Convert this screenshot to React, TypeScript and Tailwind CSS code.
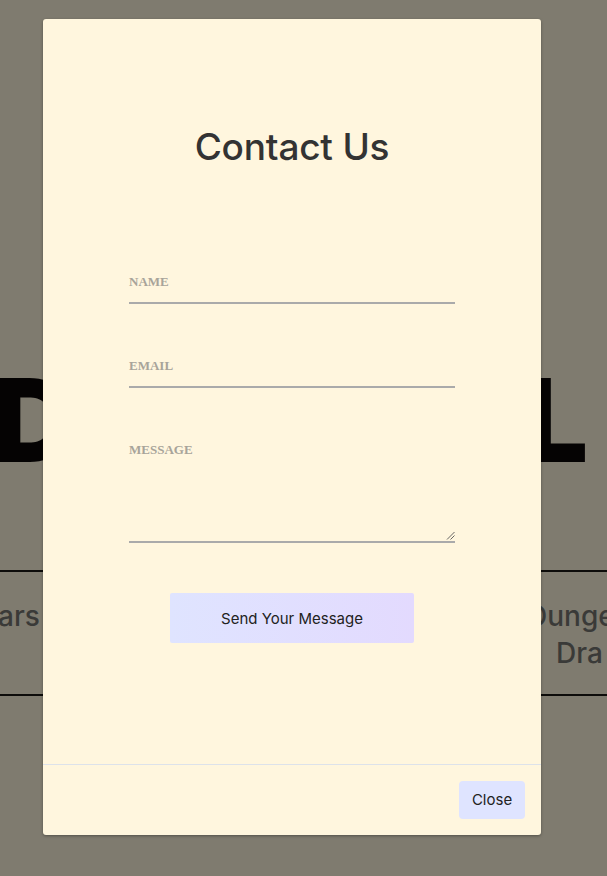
import React from "react";

const sans = { fontFamily: "Inter, 'Noto Sans', sans-serif" };

function ResizeGrip() {
  return (
    <svg width="9" height="9" viewBox="0 0 9 9" className="absolute right-0 bottom-[1px]">
      <line x1="1" y1="8.5" x2="8.5" y2="1" stroke="#555" strokeWidth="0.9" />
      <line x1="4.5" y1="8.5" x2="8.5" y2="4.5" stroke="#555" strokeWidth="0.9" />
    </svg>
  );
}

export default function App() {
  return (
    <div className="relative w-full h-[876px] overflow-hidden bg-[#7f7b6f]" style={sans}>
      {/* background page (dimmed) */}
      <div className="pt-[362px]">
        <div className="flex justify-between text-[116px] leading-none font-black text-[#050303]">
          <span className="-ml-[8px]">D</span>
          <span className="mr-[19px]">L</span>
        </div>
      </div>
      <div className="mt-[92px] border-t-2 border-b-2 border-[#0d0c0a] pt-[26px] pb-[22px] text-[28px] leading-[37px] font-medium text-[#3a3a38]">
        <div className="flex">
          <div className="w-[527px] shrink-0">
            <span className="block -ml-[2px]">ars</span>
          </div>
          <div className="whitespace-nowrap">
            <div>Dunge</div>
            <div className="pl-[29px]">Dra</div>
          </div>
        </div>
      </div>

      {/* modal */}
      <div className="absolute left-[43px] top-[19px] w-[498px] h-[816px] rounded-[3px] bg-[#fff6de] shadow-[0_1px_3px_rgba(0,0,0,0.35)] flex flex-col">
        <div className="flex-1 flex flex-col items-center pt-[105px]">
          <h1 className="text-[37px] leading-[46px] font-medium text-[#333333] tracking-[-0.2px]">Contact Us</h1>
          <div className="w-[326px] mt-[104px] flex flex-col" style={{ fontFamily: "'Liberation Serif', 'Times New Roman', serif" }}>
            <div className="pb-[12px] border-b-2 border-[#aaaaaa]">
              <span className="block text-[13px] leading-[16px] font-bold text-[#a8a49a]">NAME</span>
            </div>
            <div className="mt-[54px] pb-[12px] border-b-2 border-[#aaaaaa]">
              <span className="block text-[13px] leading-[16px] font-bold text-[#a8a49a]">EMAIL</span>
            </div>
            <div className="relative mt-[54px] pb-[83px] border-b-2 border-[#aaaaaa]">
              <span className="block text-[13px] leading-[16px] font-bold text-[#a8a49a]">MESSAGE</span>
              <ResizeGrip />
            </div>
          </div>
          <button className="mt-[50px] w-[244px] h-[50px] rounded-[2px] bg-gradient-to-r from-[#dfe4ff] to-[#e3dafe] text-[15px] leading-[20px] pt-[2px] text-[#222222]">
            Send Your Message
          </button>
        </div>
        <div className="border-t border-[#dde2ea] h-[71px] flex items-center justify-end pr-4">
          <button className="w-[66px] h-[38px] rounded-[4px] bg-[#dfe4ff] text-[15px] text-[#222222]">Close</button>
        </div>
      </div>
    </div>
  );
}
